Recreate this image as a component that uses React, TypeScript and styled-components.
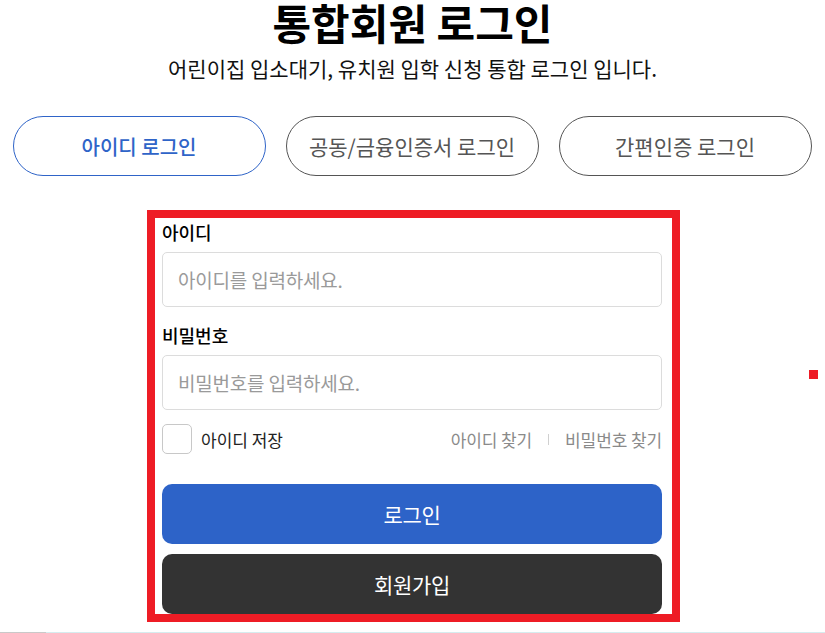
import React from 'react'
import styled, { createGlobalStyle } from 'styled-components'

const GlobalStyle = createGlobalStyle`
  html, body {
    margin: 0;
    padding: 0;
    background: #fff;
  }
  body {
    font-family: 'Noto Sans CJK KR', 'Noto Sans', sans-serif;
    color: #111;
  }
  * { box-sizing: border-box; }
`

const Page = styled.div`
  position: relative;
  width: 825px;
  height: 633px;
  overflow: hidden;
  display: flex;
  flex-direction: column;
  align-items: center;
`

const Title = styled.h1`
  margin: 0;
  padding-top: 1px;
  font-size: 42px;
  line-height: 42px;
  font-weight: 700;
  color: #000;
`

const SubTitle = styled.p`
  margin: 14px 0 0;
  font-size: 21px;
  line-height: 22px;
  color: #111;
`

const TabRow = styled.div`
  display: flex;
  gap: 20px;
  margin-top: 37px;
  padding-right: 1px;
`

const Tab = styled.button<{ $active?: boolean }>`
  width: 253px;
  height: 60px;
  border-radius: 30px;
  border: 1px solid ${({ $active }) => ($active ? '#2f64c8' : '#555')};
  background: #fff;
  color: ${({ $active }) => ($active ? '#2f64c8' : '#555')};
  font-family: inherit;
  font-size: ${({ $active }) => ($active ? 20 : 21)}px;
  font-weight: ${({ $active }) => ($active ? 500 : 400)};
  cursor: pointer;
`

const FormBox = styled.form`
  margin-top: 34px;
  margin-left: 2px;
  width: 533px;
  border: 8px solid #ee1c25;
  padding: 1px 10px 0 7px;
  display: flex;
  flex-direction: column;
`

const Label = styled.label<{ $gap?: number }>`
  display: block;
  margin-top: ${({ $gap }) => $gap || 0}px;
  font-size: 18px;
  line-height: 26px;
  font-weight: 500;
  color: #000;
`

const Input = styled.input`
  margin-top: 7px;
  width: 500px;
  height: 55px;
  border: 1px solid #dcdcdc;
  border-radius: 5px;
  padding: 0 15px;
  font-family: inherit;
  font-size: 19px;
  letter-spacing: -0.2px;
  color: #222;
  outline: none;
  &::placeholder {
    color: #9a9a9a;
  }
`

const OptionRow = styled.div`
  margin-top: 14px;
  height: 30px;
  display: flex;
  align-items: center;
  justify-content: space-between;
`

const SaveId = styled.label`
  display: flex;
  align-items: center;
  gap: 9px;
  font-size: 17px;
  color: #222;
`

const CheckBox = styled.span`
  width: 30px;
  height: 30px;
  border: 1px solid #c8c8c8;
  border-radius: 5px;
  background: #fff;
`

const FindLinks = styled.div`
  display: flex;
  align-items: center;
  gap: 16px;
  font-size: 17px;
  letter-spacing: -0.1px;
  color: #8a8a8a;
`

const Divider = styled.span`
  width: 1px;
  height: 11px;
  background: #d0d0d0;
`

const ActionButton = styled.button<{ $dark?: boolean; $gap: number }>`
  margin-top: ${({ $gap }) => $gap}px;
  width: 500px;
  height: 60px;
  border: none;
  border-radius: 10px;
  background: ${({ $dark }) => ($dark ? '#333333' : '#2d63c8')};
  color: #fff;
  font-family: inherit;
  font-size: 21px;
  letter-spacing: -0.3px;
  cursor: pointer;
`

const Marker = styled.span`
  position: absolute;
  left: 809px;
  top: 370px;
  width: 9px;
  height: 9px;
  background: #ee1c25;
`

const BottomLine = styled.div`
  position: absolute;
  left: 0;
  right: 0;
  bottom: 0;
  height: 1px;
  background: linear-gradient(to right, #c9c9c9 0 46px, #d6ecef 46px);
`

export default function App() {
  return (
    <>
      <GlobalStyle />
      <Page>
        <Title>통합회원 로그인</Title>
        <SubTitle>어린이집 입소대기, 유치원 입학 신청 통합 로그인 입니다.</SubTitle>
        <TabRow>
          <Tab $active>아이디 로그인</Tab>
          <Tab>공동/금융인증서 로그인</Tab>
          <Tab>간편인증 로그인</Tab>
        </TabRow>
        <FormBox onSubmit={(e) => e.preventDefault()}>
          <Label htmlFor="userId">아이디</Label>
          <Input id="userId" placeholder="아이디를 입력하세요." />
          <Label htmlFor="userPw" $gap={15}>비밀번호</Label>
          <Input id="userPw" type="password" placeholder="비밀번호를 입력하세요." />
          <OptionRow>
            <SaveId>
              <CheckBox />
              아이디 저장
            </SaveId>
            <FindLinks>
              <span>아이디 찾기</span>
              <Divider />
              <span>비밀번호 찾기</span>
            </FindLinks>
          </OptionRow>
          <ActionButton type="submit" $gap={30}>로그인</ActionButton>
          <ActionButton type="button" $dark $gap={10}>회원가입</ActionButton>
        </FormBox>
        <Marker />
        <BottomLine />
      </Page>
    </>
  )
}
